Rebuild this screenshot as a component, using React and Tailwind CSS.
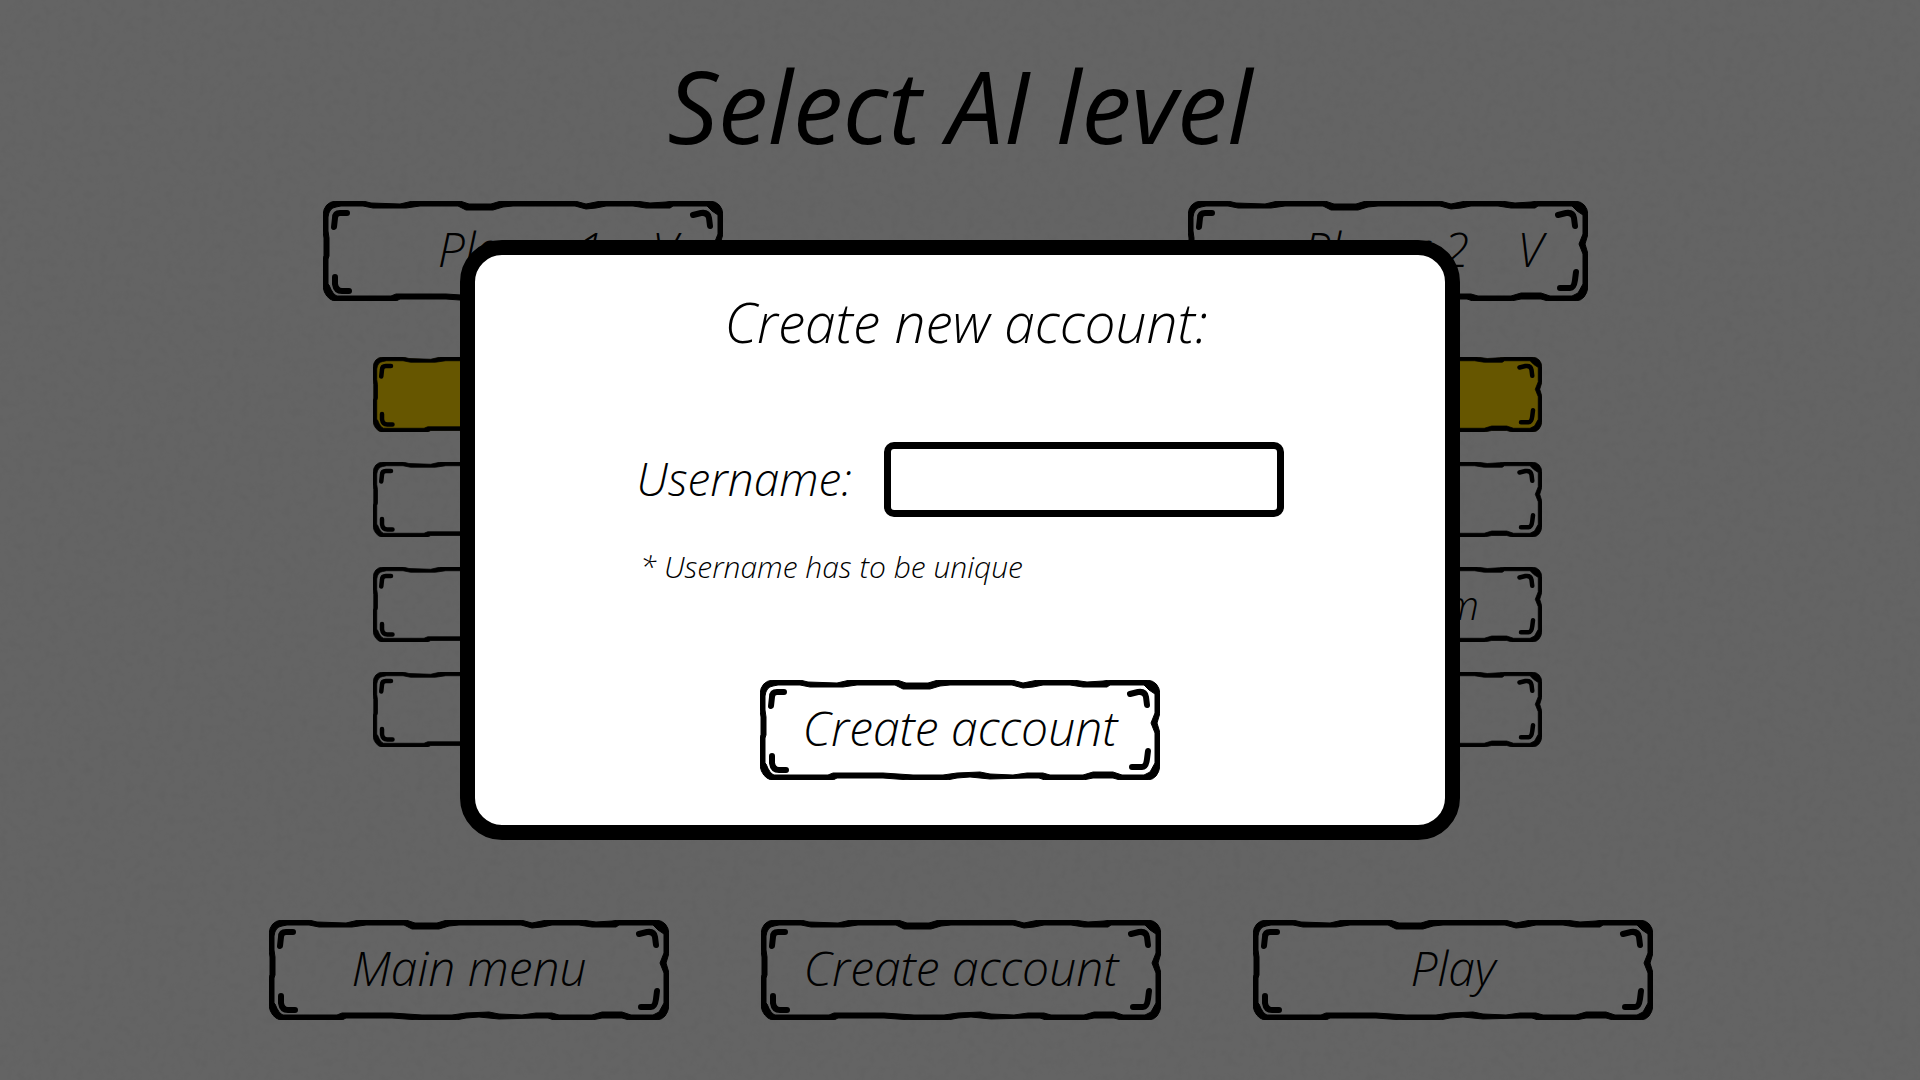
import React from "react";

const OUTER =
  "M0 14 Q1 1 13 0 L40 0 L48 2 L77 3 L90 0 L137 0 L146 3 L168 3 L178 0 L252 0 L263 3 L278 0 L313 0 L327 2 L343 1 L350 0 L387 0 Q399 1 400 14 L400 33 L397 43 L400 53 L400 86 Q398 99 388 100 L360 100 L353 98 L333 98 L323 100 L285 100 L279 98 L267 98 L230 99 L210 97 L197 98 L187 100 L150 100 L123 98 L77 98 L73 100 L11 100 Q2 97 0 86 L0 57 L1 55 L1 37 L0 30 Z";
const INNER =
  "M5 16 Q6 7 13 6 L18 5 L40 5 L50 7 L83 7 L97 5 L135 5 L143 9 L170 9 L180 6 L190 5 L252 5 L263 8 L273 7 L283 5 L310 5 L323 7 L347 7 L350 5 L384 5 L389 10 L395 14 L395 33 L391 43 L395 53 L395 83 L390 92 L384 95 L362 95 L353 92 L333 92 L323 95 L290 95 L283 93 L267 93 L253 95 L230 94 L220 92 L197 93 L183 95 L153 95 L123 93 L73 93 L68 95 L14 95 Q10 94 6 84 L5 83 L5 58 L6 55 L6 37 L5 30 Z";

function Frame({ fill = "none" }) {
  return (
    <svg
      viewBox="0 0 400 100"
      preserveAspectRatio="none"
      aria-hidden="true"
      className="absolute inset-0 h-full w-full"
    >
      <path d={OUTER} fill={fill} />
      <path d={OUTER + INNER} fill="#000" fillRule="evenodd" stroke="#000" strokeWidth="1" />
      <g fill="none" stroke="#000" strokeWidth="6" strokeLinecap="round" strokeLinejoin="round">
        <path d="M11 26 L12 17 Q12 12 17 12 L24 12" />
        <path d="M370 14 L378 12 Q385 11 386 17 L387 25" />
        <path d="M12 76 L12 83 Q13 90 19 90 L26 90" />
        <path d="M388 71 L387 79 Q386 87 382 87 L372 87" />
      </g>
    </svg>
  );
}

function SketchButton({ children, fill, small, ...rest }) {
  return (
    <button
      type="button"
      className={
        small
          ? "relative flex h-[75px] w-[300px] items-center justify-center text-[40px] leading-none"
          : "relative flex h-[100px] w-[400px] items-center justify-center pb-1 text-[48px] leading-none"
      }
      {...rest}
    >
      <Frame fill={fill} />
      <span className="relative flex w-full items-center justify-center">{children}</span>
    </button>
  );
}

function PlayerPicker({ name }) {
  return (
    <SketchButton>
      <span className="w-[115px]" />
      <span>{name}</span>
      <span className="flex-1 pl-12 text-left">V</span>
    </SketchButton>
  );
}

function LevelColumn({ player, levels }) {
  return (
    <div className="flex flex-col items-center gap-[30px]">
      {levels.map((level, i) => (
        <SketchButton
          key={i}
          small
          fill={i === 0 ? "#ffd700" : "none"}
          aria-label={`${player}, level ${i + 1}`}
        >
          {level}
        </SketchButton>
      ))}
    </div>
  );
}

function PaperGrain() {
  return (
    <svg aria-hidden="true" className="pointer-events-none absolute inset-0 h-full w-full opacity-10">
      <filter id="grain">
        <feTurbulence type="fractalNoise" baseFrequency="0.12" numOctaves="3" seed="4" />
        <feColorMatrix type="saturate" values="0" />
      </filter>
      <rect width="100%" height="100%" filter="url(#grain)" />
    </svg>
  );
}

export default function App() {
  return (
    <div className="relative min-h-screen bg-[#fcfcfc] font-['Open_Sans',sans-serif] font-light text-black italic">
      <PaperGrain />
      <main className="relative flex min-h-screen flex-col pt-[53px] pb-[60px]">
        <h1 className="text-center text-[100px] leading-[104px] font-normal">Select AI level</h1>
        <div className="mt-11 grid grid-cols-2 justify-items-center pr-[99px] pl-[90px]">
          <PlayerPicker name="Player 1" />
          <PlayerPicker name="Player 2" />
        </div>
        <div className="mt-14 grid grid-cols-2 pr-[93px] pl-[88px]">
          <LevelColumn player="Player 1" levels={["", "", "", ""]} />
          <LevelColumn player="Player 2" levels={["", "", "Maximum", ""]} />
        </div>
        <div className="mt-auto grid grid-cols-3 justify-items-center pr-[221px] pl-[223px]">
          <SketchButton>Main menu</SketchButton>
          <SketchButton>Create account</SketchButton>
          <SketchButton>Play</SketchButton>
        </div>
      </main>

      <div className="fixed inset-0 flex items-center justify-center bg-black/60">
        <form
          role="dialog"
          aria-labelledby="dialog-title"
          onSubmit={(e) => e.preventDefault()}
          className="flex w-[1000px] flex-col items-center rounded-[42px] border-[15px] border-black bg-white pt-[35px] pb-[45px]"
        >
          <h2 id="dialog-title" className="pl-3 text-[55px] leading-[64px]">
            Create new account:
          </h2>
          <div className="mt-[88px] flex items-center gap-8">
            <label htmlFor="username" className="pb-1 text-[46px] leading-[64px]">
              Username:
            </label>
            <input
              id="username"
              type="text"
              className="h-[75px] w-[400px] rounded-[10px] border-[7px] border-black bg-white px-3 text-[36px] outline-none"
            />
          </div>
          <p className="mt-[30px] w-[640px] text-[30px] leading-10">* Username has to be unique</p>
          <div className="mt-[93px]">
            <SketchButton>Create account</SketchButton>
          </div>
        </form>
      </div>
    </div>
  );
}
